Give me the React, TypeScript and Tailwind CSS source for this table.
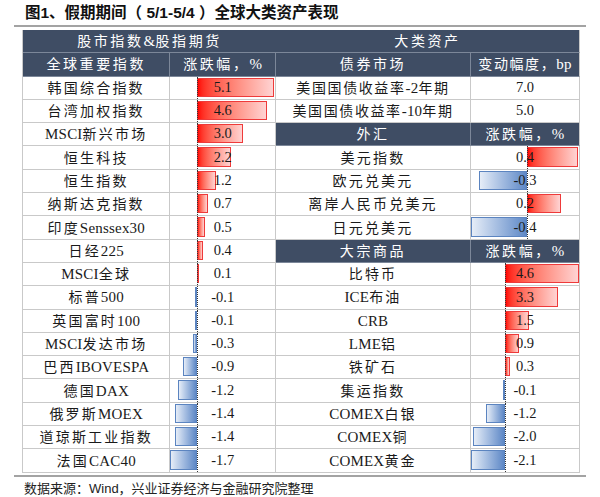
import React from "react";

type Row = [string, number];

const leftRows: Row[] = [
  ["韩国综合指数", 5.1],
  ["台湾加权指数", 4.6],
  ["MSCI新兴市场", 3.0],
  ["恒生科技", 2.2],
  ["恒生指数", 1.2],
  ["纳斯达克指数", 0.7],
  ["印度Senssex30", 0.5],
  ["日经225", 0.4],
  ["MSCI全球", 0.1],
  ["标普500", -0.1],
  ["英国富时100", -0.1],
  ["MSCI发达市场", -0.3],
  ["巴西IBOVESPA", -0.9],
  ["德国DAX", -1.2],
  ["俄罗斯MOEX", -1.4],
  ["道琼斯工业指数", -1.4],
  ["法国CAC40", -1.7],
];

const bonds: Row[] = [
  ["美国国债收益率-2年期", 7.0],
  ["美国国债收益率-10年期", 5.0],
];

const fx: [string, number, number][] = [
  ["美元指数", 0.4, 51],
  ["欧元兑美元", -0.3, 48],
  ["离岸人民币兑美元", 0.2, 34],
  ["日元兑美元", -0.4, 56],
];

const commodities: Row[] = [
  ["比特币", 4.6],
  ["ICE布油", 3.3],
  ["CRB", 1.5],
  ["LME铝", 0.9],
  ["铁矿石", 0.3],
  ["集运指数", -0.1],
  ["COMEX白银", -1.2],
  ["COMEX铜", -2.0],
  ["COMEX黄金", -2.1],
];

const fmt = (v: number) => v.toFixed(1);

function Mixed({ text, cjk = "tracking-[2.2px]" }: { text: string; cjk?: string }) {
  const runs = text.match(/[\u3000-\u9fff\uff00-\uffef]+|[^\u3000-\u9fff\uff00-\uffef]+/g) || [];
  return (
    <span className="whitespace-nowrap">
      {runs.map((r, i) =>
        /[\u3000-\u9fff\uff00-\uffef]/.test(r) ? (
          <span key={i} className={`text-[14px] ${cjk}`}>
            {r}
          </span>
        ) : (
          <span key={i} className="text-[15px] tracking-[0.2px]">
            {r}
          </span>
        )
      )}
    </span>
  );
}

function Bar({ v, zero, w }: { v: number; zero: number; w: number }) {
  const pos = v >= 0;
  return (
    <div className="relative h-full w-full">
      <div
        className={
          pos
            ? "absolute top-[1px] bottom-[2px] border border-[#ee3a3a] bg-linear-to-r from-[#ff0000] to-[#ffd3d3]"
            : "absolute top-[1px] bottom-[2px] border border-[#5b84c0] bg-linear-to-r from-[#e6edf7] to-[#5e88c6]"
        }
        style={pos ? { left: zero, width: w } : { left: zero - w, width: w }}
      />
      <div
        className="absolute top-0 bottom-0 border-l border-dotted border-[#333]"
        style={{ left: zero }}
      />
      <div className="relative z-10 flex h-full items-center justify-center text-[14.5px] text-[#1a1a1a]">
        {fmt(v)}
      </div>
    </div>
  );
}

const serif = "font-['Liberation_Serif','Noto_Sans_CJK_SC',serif]";
const rowH = "h-[23.3px]";
const cellB = "border-r border-b border-[#c9c9c9]";
const hdrCell =
  "flex items-center justify-center border-r border-b border-[#7c8799] bg-[#3f4d64] text-white";
const nameCell = "flex items-center justify-center text-[#1a1a1a]";

export default function App() {
  return (
    <div className={`w-[600px] h-[497px] bg-white ${serif}`}>
      <div className="px-[14px]">
        <div className="h-[25px] pl-[11px] pt-[3px] font-['Liberation_Sans','Noto_Sans_CJK_SC',sans-serif] text-[15.5px] font-bold leading-[19px] text-[#111]">
          图1、假期期间（ 5/1-5/4 ）全球大类资产表现
        </div>
        <div className="h-[2px] bg-[#a3a3a3]" />
        <div className="mx-[8px] mt-[3px] flex">
          {/* Left table */}
          <div className="w-[254px] border-l border-[#c9c9c9]">
            <div className={`${rowH} ${hdrCell} w-[254px]`}>
              <Mixed text="股市指数&股指期货" cjk="tracking-[2.6px]" />
            </div>
            <div className={`flex ${rowH}`}>
              <div className={`${hdrCell} w-[148px]`}>
                <Mixed text="全球重要指数" cjk="tracking-[2.6px]" />
              </div>
              <div className={`${hdrCell} w-[106px]`}>
                <Mixed text="涨跌幅，%" cjk="tracking-[2.6px]" />
              </div>
            </div>
            {leftRows.map(([n, v]) => (
              <div key={n} className={`flex ${rowH}`}>
                <div className={`${nameCell} ${cellB} w-[148px]`}>
                  <Mixed text={n} />
                </div>
                <div className={`${cellB} w-[106px]`}>
                  <Bar v={v} zero={27} w={Math.max(2, Math.abs(v) * (v >= 0 ? 15.1 : 15.9))} />
                </div>
              </div>
            ))}
          </div>
          {/* Right table */}
          <div className="w-[304px]">
            <div className={`${rowH} ${hdrCell} w-[304px] border-r-[#c9c9c9]`}>
              <Mixed text="大类资产" cjk="tracking-[2.6px]" />
            </div>
            <div className={`flex ${rowH}`}>
              <div className={`${hdrCell} w-[195px]`}>
                <Mixed text="债券市场" cjk="tracking-[2.6px]" />
              </div>
              <div className={`${hdrCell} w-[109px] border-r-[#c9c9c9]`}>
                <Mixed text="变动幅度，bp" cjk="tracking-[1.6px]" />
              </div>
            </div>
            {bonds.map(([n, v]) => (
              <div key={n} className={`flex ${rowH}`}>
                <div className={`${nameCell} ${cellB} w-[195px]`}>
                  <Mixed text={n} cjk="tracking-[1.6px]" />
                </div>
                <div className={`${cellB} w-[109px] flex items-center justify-center text-[14.5px] text-[#1a1a1a]`}>
                  {fmt(v)}
                </div>
              </div>
            ))}
            <div className={`flex ${rowH}`}>
              <div className={`${hdrCell} w-[195px]`}>
                <Mixed text="外汇" cjk="tracking-[2.6px]" />
              </div>
              <div className={`${hdrCell} w-[109px] border-r-[#c9c9c9]`}>
                <Mixed text="涨跌幅，%" cjk="tracking-[2.6px]" />
              </div>
            </div>
            {fx.map(([n, v, w]) => (
              <div key={n} className={`flex ${rowH}`}>
                <div className={`${nameCell} ${cellB} w-[195px]`}>
                  <Mixed text={n} />
                </div>
                <div className={`${cellB} w-[109px]`}>
                  <Bar v={v} zero={56} w={w} />
                </div>
              </div>
            ))}
            <div className={`flex ${rowH}`}>
              <div className={`${hdrCell} w-[195px]`}>
                <Mixed text="大宗商品" cjk="tracking-[2.6px]" />
              </div>
              <div className={`${hdrCell} w-[109px] border-r-[#c9c9c9]`}>
                <Mixed text="涨跌幅，%" cjk="tracking-[2.6px]" />
              </div>
            </div>
            {commodities.map(([n, v]) => (
              <div key={n} className={`flex ${rowH}`}>
                <div className={`${nameCell} ${cellB} w-[195px]`}>
                  <Mixed text={n} />
                </div>
                <div className={`${cellB} w-[109px]`}>
                  <Bar v={v} zero={34} w={Math.max(2, Math.abs(v) * 16)} />
                </div>
              </div>
            ))}
          </div>
        </div>
        <div className="mt-[2px] h-[2px] bg-[#a3a3a3]" />
        <div className="pl-[10px] pt-[4px] font-['Liberation_Sans','Noto_Sans_CJK_SC',sans-serif] text-[13px] leading-[16px] text-[#222]">
          数据来源：Wind，兴业证券经济与金融研究院整理
        </div>
      </div>
    </div>
  );
}
